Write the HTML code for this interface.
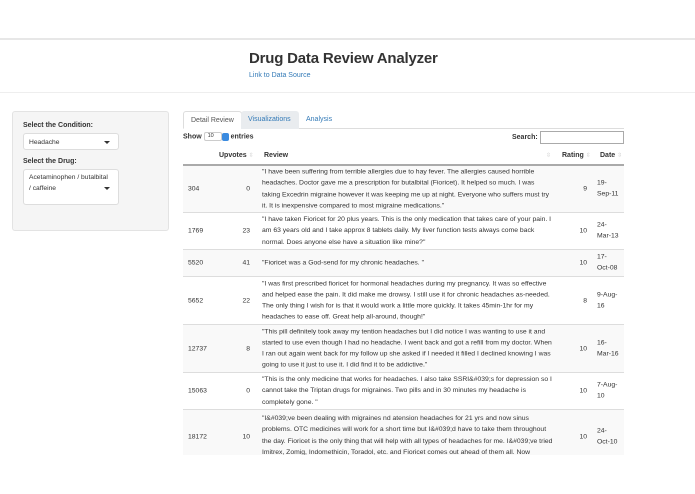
<!DOCTYPE html>
<html><head><style>
*{box-sizing:border-box;margin:0;padding:0}
body{width:695px;height:494px;background:#fff;font-family:"Liberation Sans",Arial,sans-serif;color:#333;position:relative;overflow:hidden}
.topline{position:absolute;left:0;top:38px;width:695px;height:2px;background:#e7e7e7}
.hline{position:absolute;left:0;top:92px;width:695px;height:1px;background:#eee}
h1{position:absolute;left:249px;top:50px;font-size:15px;font-weight:bold;color:#333;letter-spacing:-0.2px}
.link{position:absolute;left:249px;top:72px;font-size:7px;color:#337ab7}
.side{position:absolute;left:12px;top:111px;width:157px;height:120px;background:#f5f5f5;border:1px solid #e3e3e3;border-radius:3px}
.lbl{position:absolute;left:10px;font-size:7px;font-weight:bold;color:#333}
.sel{position:absolute;left:10px;width:96px;background:#fff;border:1px solid #ddd;border-radius:3px;font-size:6.7px;padding:5px 4px 5px 5px;line-height:11px;color:#333}
.caret{position:absolute;right:8px;width:0;height:0;border-left:3px solid transparent;border-right:3px solid transparent;border-top:3px solid #333}
.tabs{position:absolute;left:183px;top:111px;width:441px;height:18px;border-bottom:1px solid #ddd}
.tab{position:absolute;top:0;height:18px;font-size:7px;line-height:18px;padding:0 7px;color:#337ab7}
.tab.a{color:#555;background:#fff;border:1px solid #ddd;border-bottom-color:#fff;border-radius:3px 3px 0 0}
.tab.b{background:#e9ecef;border-radius:3px 3px 0 0}
.ctrl{position:absolute;font-size:7px;font-weight:bold}
.th{position:absolute;top:152px;font-size:7px;font-weight:bold}
.hdr{position:absolute;left:183px;top:164px;width:441px;height:2px;background:#aaa}
.row{position:absolute;left:183px;width:441px;border-bottom:1px solid #ddd;font-size:6.8px;color:#333}
.row.s{background:#f9f9f9}
.row div{position:absolute;top:50%;transform:translateY(-50%);line-height:11.3px}
.id{left:5px}.up{right:374px;text-align:right}.rv{left:79px;width:292px}.rt{right:37px}.dt{left:414px;width:22px}
.arr{color:#ccc;font-weight:normal;font-size:6px}
</style></head><body>
<div class="topline"></div>
<h1>Drug Data Review Analyzer</h1>
<div class="link">Link to Data Source</div>
<div class="hline"></div>
<div class="side">
<div class="lbl" style="top:10px">Select the Condition:</div>
<div class="sel" style="top:21px;height:17px;padding-top:3px">Headache<span class="caret" style="top:7px"></span></div>
<div class="lbl" style="top:46px">Select the Drug:</div>
<div class="sel" style="top:57px;height:36px;padding-top:2px">Acetaminophen / butalbital<br>/ caffeine<span class="caret" style="top:17px"></span></div>
</div>
<div class="tabs">
<div class="tab a" style="left:0">Detail Review</div>
<div class="tab b" style="left:58px;width:58px">Visualizations</div>
<div class="tab" style="left:116px">Analysis</div>
</div>
<div class="ctrl" style="left:183px;top:132px">Show <span style="display:inline-block;width:18px;height:9px;border:1px solid #ccc;border-radius:2px;font-weight:normal;font-size:5.5px;vertical-align:middle;line-height:7px;padding-left:3px">10</span><span style="display:inline-block;width:7px;height:8px;background:#3b8be0;border-radius:2px;vertical-align:middle;margin-right:2px"></span>entries</div>
<div class="ctrl" style="left:512px;top:134px">Search:</div>
<div style="position:absolute;left:540px;top:131px;width:84px;height:13px;border:1px solid #aaa"></div>
<div class="th" style="left:219px">Upvotes <span class="arr">⇳</span></div>
<div class="th" style="left:264px">Review</div>
<div class="th" style="left:546px"><span class="arr">⇳</span></div>
<div class="th" style="left:562px">Rating <span class="arr">⇳</span></div>
<div class="th" style="left:600px">Date <span class="arr">⇳</span></div>
<div class="hdr"></div>
<div class="row s" style="top:166px;height:47px"><div class="id">304</div><div class="up">0</div><div class="rv">"I have been suffering from terrible allergies due to hay fever. The allergies caused horrible headaches. Doctor gave me a prescription for butalbital (Fioricet). It helped so much. I was taking Excedrin migraine however it was keeping me up at night. Everyone who suffers must try it. It is inexpensive compared to most migraine medications."</div><div class="rt">9</div><div class="dt">19-Sep-11</div></div>
<div class="row" style="top:213px;height:37px"><div class="id">1769</div><div class="up">23</div><div class="rv">"I have taken Fioricet for 20 plus years. This is the only medication that takes care of your pain. I am 63 years old and I take approx 8 tablets daily. My liver function tests always come back normal. Does anyone else have a situation like mine?"</div><div class="rt">10</div><div class="dt">24-Mar-13</div></div>
<div class="row s" style="top:250px;height:27px"><div class="id">5520</div><div class="up">41</div><div class="rv">"Fioricet was a God-send for my chronic headaches. "</div><div class="rt">10</div><div class="dt">17-Oct-08</div></div>
<div class="row" style="top:277px;height:48px"><div class="id">5652</div><div class="up">22</div><div class="rv">"I was first prescribed fioricet for hormonal headaches during my pregnancy. It was so effective and helped ease the pain. It did make me drowsy. I still use it for chronic headaches as-needed. The only thing I wish for is that it would work a little more quickly. It takes 45min-1hr for my headaches to ease off. Great help all-around, though!"</div><div class="rt">8</div><div class="dt">9-Aug-16</div></div>
<div class="row s" style="top:325px;height:48px"><div class="id">12737</div><div class="up">8</div><div class="rv">"This pill definitely took away my tention headaches but I did notice I was wanting to use it and started to use even though I had no headache. I went back and got a refill from my doctor. When I ran out again went back for my follow up she asked if I needed it filled I declined knowing I was going to use it just to use it. I did find it to be addictive."</div><div class="rt">10</div><div class="dt">16-Mar-16</div></div>
<div class="row" style="top:373px;height:37px"><div class="id">15063</div><div class="up">0</div><div class="rv">"This is the only medicine that works for headaches. I also take SSRI&amp;#039;s for depression so I cannot take the Triptan drugs for migraines. Two pills and in 30 minutes my headache is completely gone. "</div><div class="rt">10</div><div class="dt">7-Aug-10</div></div>
<div style="position:absolute;left:183px;top:410px;width:441px;height:45px;overflow:hidden">
<div class="row s" style="top:0;left:0;height:60px"><div class="id" style="top:27px">18172</div><div class="up" style="top:27px">10</div><div class="rv" style="top:31px">"I&amp;#039;ve been dealing with migraines nd atension headaches for 21 yrs and now sinus problems. OTC medicines will work for a short time but I&amp;#039;d have to take them throughout the day. Fioricet is the only thing that will help with all types of headaches for me. I&amp;#039;ve tried Imitrex, Zomig, Indomethicin, Toradol, etc. and Fioricet comes out ahead of them all. Now I&amp;#039;m on Topamax."</div><div class="rt" style="top:27px">10</div><div class="dt" style="top:27px">24-Oct-10</div></div>
</div>
</body></html>
